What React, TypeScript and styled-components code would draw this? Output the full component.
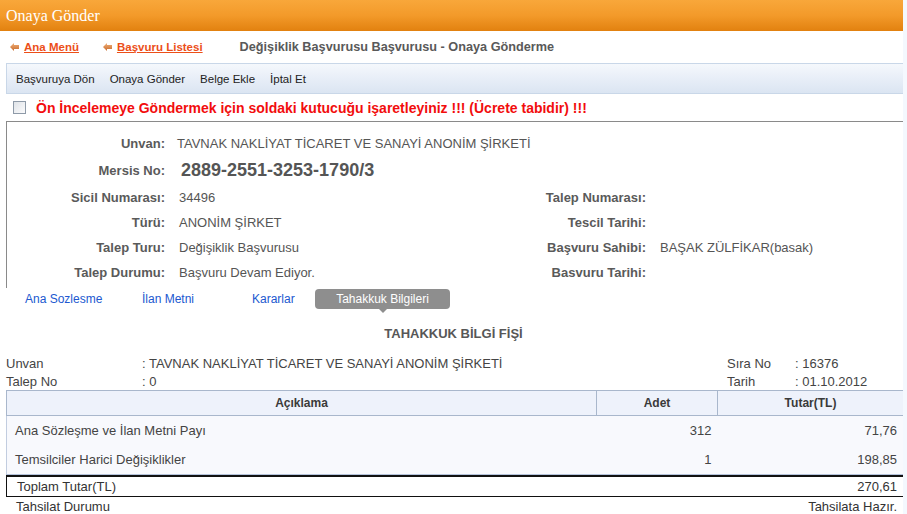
import React from "react"
import styled, { createGlobalStyle } from "styled-components"

const GlobalStyle = createGlobalStyle`
  html, body {
    margin: 0;
    padding: 0;
    background: #f4f8fe;
  }
  body {
    font-family: "Liberation Sans", Arial, sans-serif;
  }
`

const Page = styled.div`
  width: 903px;
  min-height: 514px;
  background: #fff;
`

const Header = styled.div`
  height: 31px;
  padding-left: 6px;
  display: flex;
  align-items: center;
  background: linear-gradient(#f8a73a, #f39a2a 50%, #e2810f);
  color: #fff;
  font-family: "Liberation Serif", "Times New Roman", serif;
  font-size: 16px;
`

const NavRow = styled.div`
  height: 32px;
  display: flex;
  align-items: center;
  padding-left: 10px;
`

const NavLink = styled.a`
  display: flex;
  align-items: center;
  gap: 5px;
  margin-right: 24px;
  color: #ec4f19;
  font-size: 11.5px;
  font-weight: bold;
  text-decoration: underline;
  cursor: pointer;
`

const PageTitle = styled.div`
  margin-left: 13px;
  color: #595959;
  font-size: 12.7px;
  font-weight: bold;
`

const Toolbar = styled.div`
  height: 29px;
  margin-left: 6px;
  border: 1px solid #c9d7e8;
  border-right: none;
  display: flex;
  align-items: center;
  gap: 15px;
  padding-left: 9px;
  background: linear-gradient(#f5f8fc, #e9eff8 45%, #dbe5f2);
`

const ToolItem = styled.span`
  font-size: 11.5px;
  color: #222;
  cursor: pointer;
`

const WarnRow = styled.label`
  height: 27px;
  display: flex;
  align-items: center;
  padding-left: 13px;
  gap: 10px;
  color: #f20d0d;
  font-size: 14px;
  font-weight: bold;
`

const Box = styled.span`
  width: 11px;
  height: 11px;
  border: 1px solid #8e9aa8;
  background: linear-gradient(135deg, #dfe3e8, #fbfbfc);
`

const Panel = styled.div`
  margin-left: 6px;
  border-top: 1px solid #8a8a8a;
  border-left: 1px solid #8a8a8a;
  padding: 9px 0 3px;
`

const FieldRow = styled.div<{ $h: number }>`
  display: grid;
  grid-template-columns: 158px 1fr;
  column-gap: 12px;
  align-items: center;
  height: ${(p) => p.$h}px;
`

const TwoCols = styled.div`
  display: grid;
  grid-template-columns: 479px 1fr;
`

const Col = styled.div<{ $label: number }>`
  display: grid;
  grid-template-columns: ${(p) => p.$label}px 1fr;
  column-gap: 14px;
  grid-auto-rows: 25px;
  align-items: center;
`

const Label = styled.div`
  text-align: right;
  font-size: 13px;
  font-weight: bold;
  color: #5a5a5a;
`

const Value = styled.div<{ $big?: boolean }>`
  font-size: ${(p) => (p.$big ? "18px" : "13px")};
  font-weight: ${(p) => (p.$big ? "bold" : "normal")};
  color: #555;
  padding-left: ${(p) => (p.$big ? "4px" : "0")};
`

const Tabs = styled.div`
  height: 22px;
  display: flex;
  align-items: center;
  padding-left: 25px;
`

const Tab = styled.div<{ $w: number; $active?: boolean }>`
  position: relative;
  width: ${(p) => p.$w}px;
  height: 20px;
  display: flex;
  align-items: center;
  font-size: 12px;
  color: ${(p) => (p.$active ? "#fff" : "#2158d0")};
  ${(p) =>
    p.$active &&
    `
    justify-content: center;
    background: #8e8e8e;
    border-radius: 4px;
    &::after {
      content: "";
      position: absolute;
      left: 50%;
      bottom: -4px;
      margin-left: -4px;
      border-left: 4px solid transparent;
      border-right: 4px solid transparent;
      border-top: 4px solid #8e8e8e;
    }
  `}
`

const SlipTitle = styled.div`
  text-align: center;
  padding: 16px 0 0 4px;
  height: 40px;
  box-sizing: border-box;
  font-size: 13px;
  font-weight: bold;
  color: #575757;
`

const SlipInfo = styled.div`
  display: grid;
  grid-template-columns: 721px 1fr;
  padding: 4px 0 0 6px;
`

const InfoGrid = styled.div<{ $key: number }>`
  display: grid;
  grid-template-columns: ${(p) => p.$key}px 1fr;
  grid-auto-rows: 18px;
  align-items: center;
  font-size: 13px;
  color: #444;
`

const Table = styled.table`
  margin-left: 6px;
  width: 897px;
  border-collapse: collapse;
  font-size: 13px;
  color: #444;
`

const Th = styled.th<{ $w?: number }>`
  height: 24px;
  padding: 0;
  background: #eef2fb;
  border: 1px solid #a9b7cc;
  font-size: 12px;
  font-weight: bold;
  color: #3a3a3a;
  width: ${(p) => (p.$w ? `${p.$w}px` : "auto")};
  &:last-child {
    border-right: none;
  }
`

const Td = styled.td<{ $right?: boolean }>`
  height: 29px;
  padding: 0 6px 0 8px;
  background: #f8f9fd;
  text-align: ${(p) => (p.$right ? "right" : "left")};
  border-left: 1px solid #c2cde0;
  &:not(:first-child) {
    border-left: none;
  }
`

const BodyRow = styled.tr`
  &:last-child td {
    border-bottom: 1px solid #b4c2da;
  }
`

const TotalRow = styled.div<{ $boxed?: boolean }>`
  margin-left: 6px;
  height: 19px;
  display: flex;
  align-items: center;
  justify-content: space-between;
  padding: 0 6px 0 10px;
  font-size: 13px;
  color: #333;
  border-top: ${(p) => (p.$boxed ? "2px solid #111" : "none")};
  border-bottom: ${(p) => (p.$boxed ? "1px solid #111" : "none")};
  border-left: ${(p) => (p.$boxed ? "1px solid #111" : "none")};
`

const BackArrow = () => (
  <svg width="9" height="8" viewBox="0 0 9 8">
    <defs>
      <linearGradient id="ar" x1="0" y1="0" x2="0" y2="1">
        <stop offset="0" stopColor="#f0b07a" />
        <stop offset="1" stopColor="#c86a2a" />
      </linearGradient>
    </defs>
    <path d="M0 4 L4 0 L4 2 L9 2 L9 6 L4 6 L4 8 Z" fill="url(#ar)" />
  </svg>
)

export default function App() {
  return (
    <Page>
      <GlobalStyle />
      <Header>Onaya Gönder</Header>
      <NavRow>
        <NavLink>
          <BackArrow />
          Ana Menü
        </NavLink>
        <NavLink>
          <BackArrow />
          Başvuru Listesi
        </NavLink>
        <PageTitle>Değişiklik Başvurusu Başvurusu - Onaya Gönderme</PageTitle>
      </NavRow>
      <Toolbar>
        <ToolItem>Başvuruya Dön</ToolItem>
        <ToolItem>Onaya Gönder</ToolItem>
        <ToolItem>Belge Ekle</ToolItem>
        <ToolItem>İptal Et</ToolItem>
      </Toolbar>
      <WarnRow>
        <Box />
        Ön İncelemeye Göndermek için soldaki kutucuğu işaretleyiniz !!! (Ücrete tabidir) !!!
      </WarnRow>
      <Panel>
        <FieldRow $h={24}>
          <Label>Unvan:</Label>
          <Value>TAVNAK NAKLİYAT TİCARET VE SANAYİ ANONİM ŞİRKETİ</Value>
        </FieldRow>
        <FieldRow $h={30}>
          <Label>Mersis No:</Label>
          <Value $big>2889-2551-3253-1790/3</Value>
        </FieldRow>
        <TwoCols>
          <Col $label={158}>
            <Label>Sicil Numarası:</Label>
            <Value>34496</Value>
            <Label>Türü:</Label>
            <Value>ANONİM ŞİRKET</Value>
            <Label>Talep Turu:</Label>
            <Value>Değişiklik Başvurusu</Value>
            <Label>Talep Durumu:</Label>
            <Value>Başvuru Devam Ediyor.</Value>
          </Col>
          <Col $label={160}>
            <Label>Talep Numarası:</Label>
            <Value />
            <Label>Tescil Tarihi:</Label>
            <Value />
            <Label>Başvuru Sahibi:</Label>
            <Value>BAŞAK ZÜLFİKAR(basak)</Value>
            <Label>Basvuru Tarihi:</Label>
            <Value />
          </Col>
        </TwoCols>
      </Panel>
      <Tabs>
        <Tab $w={117}>Ana Sozlesme</Tab>
        <Tab $w={110}>İlan Metni</Tab>
        <Tab $w={63}>Kararlar</Tab>
        <Tab $w={135} $active>
          Tahakkuk Bilgileri
        </Tab>
      </Tabs>
      <SlipTitle>TAHAKKUK BİLGİ FİŞİ</SlipTitle>
      <SlipInfo>
        <InfoGrid $key={136}>
          <span>Unvan</span>
          <span>: TAVNAK NAKLİYAT TİCARET VE SANAYİ ANONİM ŞİRKETİ</span>
          <span>Talep No</span>
          <span>: 0</span>
        </InfoGrid>
        <InfoGrid $key={68}>
          <span>Sıra No</span>
          <span>: 16376</span>
          <span>Tarih</span>
          <span>: 01.10.2012</span>
        </InfoGrid>
      </SlipInfo>
      <Table>
        <thead>
          <tr>
            <Th $w={589}>Açıklama</Th>
            <Th $w={120}>Adet</Th>
            <Th>Tutar(TL)</Th>
          </tr>
        </thead>
        <tbody>
          <BodyRow>
            <Td>Ana Sözleşme ve İlan Metni Payı</Td>
            <Td $right>312</Td>
            <Td $right>71,76</Td>
          </BodyRow>
          <BodyRow>
            <Td>Temsilciler Harici Değişiklikler</Td>
            <Td $right>1</Td>
            <Td $right>198,85</Td>
          </BodyRow>
        </tbody>
      </Table>
      <TotalRow $boxed>
        <span>Toplam Tutar(TL)</span>
        <span>270,61</span>
      </TotalRow>
      <TotalRow>
        <span>Tahsilat Durumu</span>
        <span>Tahsilata Hazır.</span>
      </TotalRow>
    </Page>
  )
}
